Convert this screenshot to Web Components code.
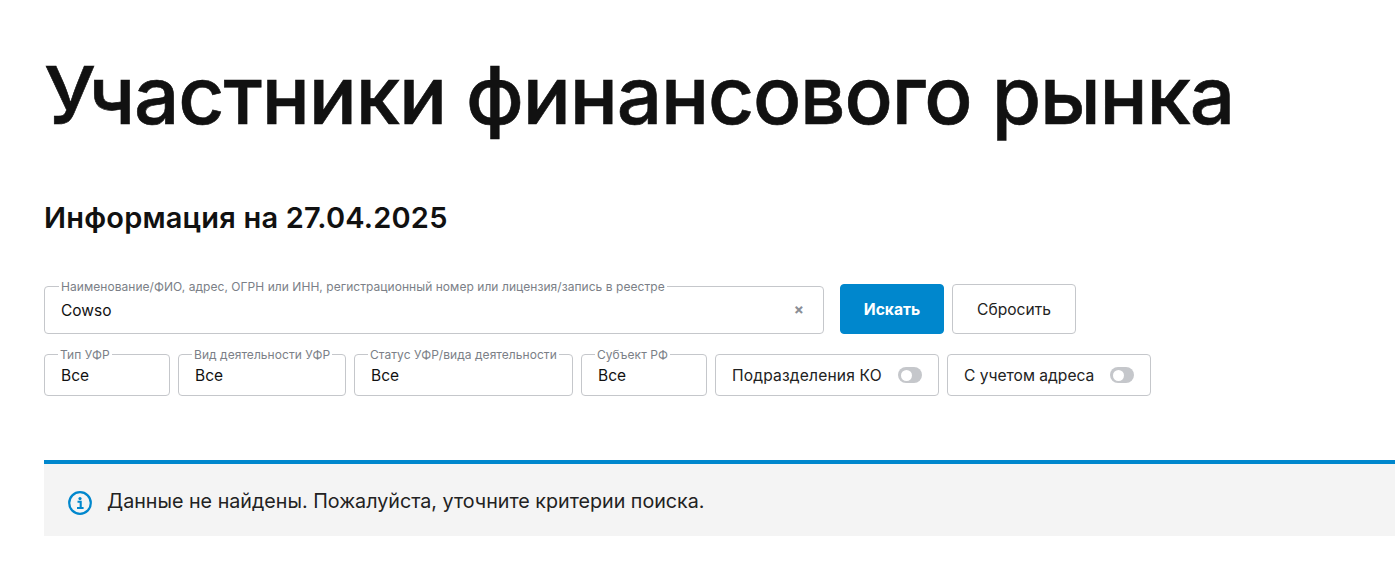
<!DOCTYPE html>
<html lang="ru"><head><meta charset="utf-8"><style>
html,body{margin:0;background:#fff;overflow:hidden}
body{font-family:Inter,"Noto Sans",sans-serif;color:#111}
</style></head><body>
<cbr-page>
<h1 slot="title">Участники финансового рынка</h1>
<h2 slot="sub">Информация на 27.04.2025</h2>
<cbr-field slot="search" w="780" h="48" label="Наименование/ФИО, адрес, ОГРН или ИНН, регистрационный номер или лицензия/запись в реестре" value="Cowso" clear></cbr-field>
<cbr-button slot="search" primary w="104">Искать</cbr-button>
<cbr-button slot="search" w="124">Сбросить</cbr-button>
<cbr-field slot="filters" w="126" label="Тип УФР" value="Все"></cbr-field>
<cbr-field slot="filters" w="168" label="Вид деятельности УФР" value="Все"></cbr-field>
<cbr-field slot="filters" w="219" label="Статус УФР/вида деятельности" value="Все"></cbr-field>
<cbr-field slot="filters" w="126" label="Субъект РФ" value="Все"></cbr-field>
<cbr-toggle slot="filters" w="224" ls=".16">Подразделения КО</cbr-toggle>
<cbr-toggle slot="filters" w="204" ls="0">С учетом адреса</cbr-toggle>
<cbr-notice slot="notice">Данные не найдены. Пожалуйста, уточните критерии поиска.</cbr-notice>
</cbr-page>
<script>
function def(name,css,html,init){
 customElements.define(name,class extends HTMLElement{
  constructor(){super();const s=this.attachShadow({mode:'open'});s.innerHTML='<style>'+css+'</style>'+html;}
  connectedCallback(){if(init)init(this,this.shadowRoot);}
 });
}
def('cbr-page',`
:host{display:block;padding:0 0 0 44px}
.t{display:block;padding-top:47px}
::slotted(h1){margin:0;font:500 80px/96px Inter,sans-serif;letter-spacing:-1.15px;-webkit-text-stroke:.6px #111;color:#111}
::slotted(h2){margin:0;font:600 29px/36px Inter,sans-serif;letter-spacing:.2px;color:#111}
.s{display:block;margin-top:57px}
.r1{display:flex;align-items:flex-end;gap:8px;margin-top:48px}
.r2{display:flex;align-items:flex-end;gap:8px;margin-top:20px}
.n{display:block;margin-top:64px}
`,`<div class="t"><slot name="title"></slot></div><div class="s"><slot name="sub"></slot></div>
<div class="r1"><slot name="search"></slot></div><div class="r2"><slot name="filters"></slot></div><div class="n"><slot name="notice"></slot></div>`);
def('cbr-field',`
:host{display:block;box-sizing:border-box;position:relative}
.b{box-sizing:border-box;height:100%;border:1px solid #c5c7cb;border-radius:4px;display:flex;align-items:center;justify-content:space-between;padding:0 19px 0 16px;font-size:15.5px;color:#111}
.l{position:absolute;left:14px;top:-6px;padding:0 2px;background:#fff;font-size:12px;line-height:14px;letter-spacing:.05px;color:#7b7f87;white-space:nowrap}
:host([clear]) .l{left:15px}
.x{font-size:15px;font-weight:700;color:#8a8e96;line-height:1;margin-top:-2px}
`,`<div class="b"><span class="v"></span><span class="x">×</span></div><span class="l"></span>`,(h,s)=>{
 h.style.width=h.getAttribute('w')+'px';h.style.height=(h.getAttribute('h')||42)+'px';
 s.querySelector('.l').textContent=h.getAttribute('label');
 s.querySelector('.v').textContent=h.getAttribute('value');
 if(!h.hasAttribute('clear'))s.querySelector('.x').remove();
 if(h.hasAttribute('clear'))h.style.marginRight='8px';
});
def('cbr-button',`
:host{display:block;box-sizing:border-box;height:50px;border:1px solid #c5c7cb;border-radius:4px;display:flex;align-items:center;justify-content:center;font-size:15.6px;color:#222}
:host([primary]){background:#0087cd;border-color:#0087cd;color:#fff;font-weight:700}
`,`<slot></slot>`,(h)=>{h.style.width=h.getAttribute('w')+'px';});
def('cbr-toggle',`
:host{display:flex;box-sizing:border-box;height:42px;border:1px solid #c5c7cb;border-radius:4px;align-items:center;justify-content:space-between;padding:0 16px;font-size:15.6px;color:#222}
.k{width:24px;height:16px;border-radius:8px;background:#c5c7cb;position:relative;flex:none}
.k i{position:absolute;left:3px;top:2.5px;width:11px;height:11px;border-radius:50%;background:#fff}
`,`<slot></slot><span class="k"><i></i></span>`,(h)=>{h.style.width=h.getAttribute('w')+'px';h.style.letterSpacing=h.getAttribute('ls')+'px';});
def('cbr-notice',`
:host{display:flex;box-sizing:border-box;height:76px;border-top:4px solid #0087cd;background:#f4f4f4;align-items:center;gap:15px;padding:2px 0 0 24px;font-size:19.7px;color:#222}
svg{flex:none;margin-top:3px}
`,`<svg width="24" height="24" viewBox="0 0 24 24" fill="none"><circle cx="12" cy="12" r="10.8" stroke="#0087cd" stroke-width="2.2"/><circle cx="12" cy="7.6" r="1.6" fill="#0087cd"/><path d="M9.5 10.8h3.2v6M9 17h6.6" stroke="#0087cd" stroke-width="2.1"/></svg><slot></slot>`);
</script></body></html>
